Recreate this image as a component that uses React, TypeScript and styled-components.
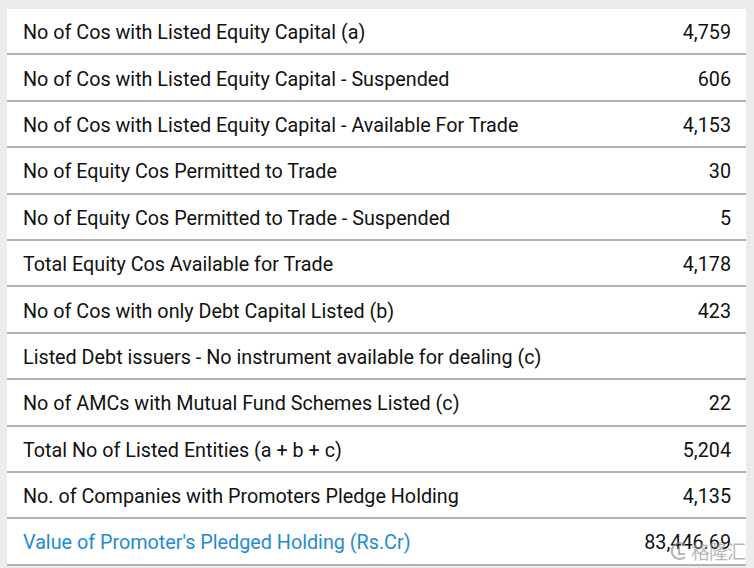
import React from "react";
import styled, { createGlobalStyle } from "styled-components";

const Global = createGlobalStyle`
  html, body { margin: 0; padding: 0; }
  body { background: #ececec; font-family: Roboto, "Noto Sans", Arial, sans-serif; }
`;

const Page = styled.div`
  width: 754px;
  height: 568px;
  overflow: hidden;
  box-sizing: border-box;
  padding: 9px 8px 0 7px;
  background: #ececec;
  position: relative;
`;

const Table = styled.div`
  background: #ffffff;
  display: flex;
  flex-direction: column;
`;

const Row = styled.div`
  height: 46.4px;
  box-sizing: border-box;
  border-bottom: 2px solid #b3b3b3;
  display: flex;
  align-items: center;
  justify-content: space-between;
  padding: 3px 15px 0 16px;
  font-size: 19.75px;
  color: #111;
`;

const Label = styled.span<{ $link?: boolean }>`
  color: ${(p) => (p.$link ? "#1f8bd5" : "#111")};
  white-space: nowrap;
`;

const Value = styled.span`
  white-space: nowrap;
  color: #111;
`;

const Watermark = styled.div`
  position: absolute;
  right: 9px;
  bottom: 6px;
  display: flex;
  align-items: center;
  gap: 1px;
  color: rgba(150, 150, 150, 0.7);
  font-family: "Noto Sans CJK SC", sans-serif;
  font-size: 19px;
  line-height: 22px;
  letter-spacing: -1px;
`;

const rows: [string, string, boolean?][] = [
  ["No of Cos with Listed Equity Capital (a)", "4,759"],
  ["No of Cos with Listed Equity Capital - Suspended", "606"],
  ["No of Cos with Listed Equity Capital - Available For Trade", "4,153"],
  ["No of Equity Cos Permitted to Trade", "30"],
  ["No of Equity Cos Permitted to Trade - Suspended", "5"],
  ["Total Equity Cos Available for Trade", "4,178"],
  ["No of Cos with only Debt Capital Listed (b)", "423"],
  ["Listed Debt issuers - No instrument available for dealing (c)", ""],
  ["No of AMCs with Mutual Fund Schemes Listed (c)", "22"],
  ["Total No of Listed Entities (a + b + c)", "5,204"],
  ["No. of Companies with Promoters Pledge Holding", "4,135"],
  ["Value of Promoter's Pledged Holding (Rs.Cr)", "83,446.69", true],
];

export default function App() {
  return (
    <>
      <Global />
      <Page>
        <Table>
          {rows.map(([l, v, link]) => (
            <Row key={l}>
              <Label $link={link}>{l}</Label>
              <Value>{v}</Value>
            </Row>
          ))}
        </Table>
        <Watermark>
          <svg width="22" height="22" viewBox="0 0 22 22">
            <path d="M17 5 A8 8 0 1 0 17 17" fill="none" stroke="rgba(150,150,150,0.7)" strokeWidth="2.2" />
            <path d="M11 7 L11 14 L17 14" fill="none" stroke="rgba(150,150,150,0.7)" strokeWidth="2.2" />
          </svg>
          <span>格隆汇</span>
        </Watermark>
      </Page>
    </>
  );
}
